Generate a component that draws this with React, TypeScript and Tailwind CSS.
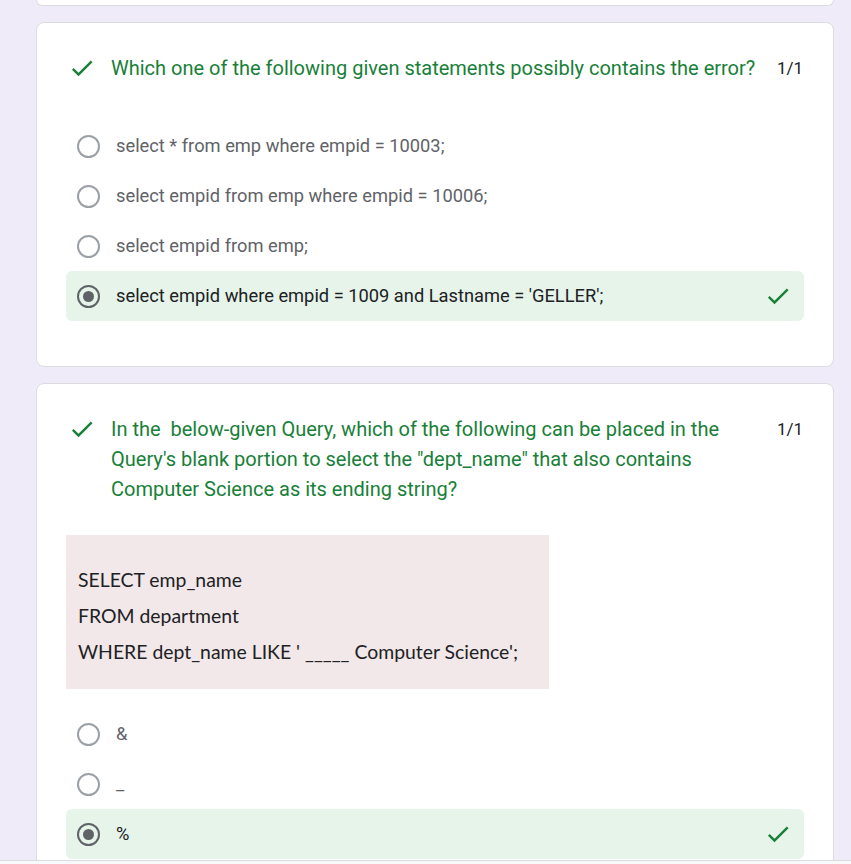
import React from "react";

const Check = ({ className = "" }: { className?: string }) => (
  <svg viewBox="0 0 24 24" className={className} fill="#188038">
    <path d="M9 16.17L4.83 12l-1.42 1.41L9 19 21 7l-1.41-1.41z" />
  </svg>
);

const Radio = ({ checked }: { checked?: boolean }) =>
  checked ? (
    <div className="w-[23px] h-[23px] rounded-full border-2 border-[#5f6368] flex items-center justify-center shrink-0">
      <div className="w-[11px] h-[11px] rounded-full bg-[#5f6368]" />
    </div>
  ) : (
    <div className="w-[23px] h-[23px] rounded-full border-2 border-[#9aa0a6] shrink-0" />
  );

const Option = ({ label, selected }: { label: string; selected?: boolean }) => (
  <div
    className={
      "flex items-center h-[50px] pl-[11px] pr-[12px] rounded-[6px] " +
      (selected ? "bg-[#e6f4ea]" : "")
    }
  >
    <Radio checked={selected} />
    <span
      className={
        "ml-[16px] text-[18.3px] flex-1 " +
        (selected ? "text-[#202124]" : "text-[#5f6368]")
      }
    >
      {label}
    </span>
    {selected && <Check className="w-[28px] h-[28px]" />}
  </div>
);

const Header = ({ children }: { children: React.ReactNode }) => (
  <div className="flex items-start">
    <Check className="w-[28px] h-[28px] shrink-0 mt-[1px] ml-[2px]" />
    <div className="ml-[15px] flex-1 text-[20px] leading-[30px] text-[#188038]">{children}</div>
    <div className="ml-[8px] text-[17px] leading-[30px] text-[#202124] w-[25px] mr-[2px]">1/1</div>
  </div>
);

export default function App() {
  return (
    <div
      className="relative h-[864px] w-[851px] overflow-hidden bg-[#f0ebf8]"
      style={{ fontFamily: "Roboto, 'Liberation Sans', sans-serif" }}
    >
      <div className="ml-[36px] w-[798px] h-[6px] bg-white border-x border-b border-[#dadce0] rounded-b-[8px]" />

      <div className="ml-[36px] mt-[16px] w-[798px] bg-white border border-[#dadce0] rounded-[8px] px-[29px] pt-[30px] pb-[45px]">
        <Header>
          <div className="whitespace-nowrap">Which one of the following given statements possibly contains the error?</div>
        </Header>
        <div className="mt-[38px] flex flex-col">
          <Option label="select * from emp where empid = 10003;" />
          <Option label="select empid from emp where empid = 10006;" />
          <Option label="select empid from emp;" />
          <Option label="select empid where empid = 1009 and Lastname = 'GELLER';" selected />
        </div>
      </div>

      <div className="ml-[36px] mt-[16px] w-[798px] bg-white border border-[#dadce0] rounded-[8px] px-[29px] pt-[30px] pb-[45px]">
        <Header>
          <div className="pr-[30px]">
            In the&nbsp; below-given Query, which of the following can be placed in the Query's blank portion to select the "dept_name" that also contains Computer Science as its ending string?
          </div>
        </Header>
        <div
          className="mt-[31px] w-[483px] bg-[#f2e8e9] pl-[12px] pt-[27px] pb-[19px] text-[19.4px] leading-[36px] text-[#202124]"
          style={{ fontFamily: "Lato, 'Open Sans', sans-serif" }}
        >
          <div>SELECT emp_name</div>
          <div>FROM department</div>
          <div>WHERE dept_name LIKE ' _____ Computer Science';</div>
        </div>
        <div className="mt-[20px] flex flex-col">
          <Option label="&" />
          <Option label="_" />
          <Option label="%" selected />
        </div>
      </div>

      <div className="absolute left-0 right-0 bottom-0 h-[4px] bg-[#f8f9fa] border-t border-[#dadce0]" />
    </div>
  );
}
